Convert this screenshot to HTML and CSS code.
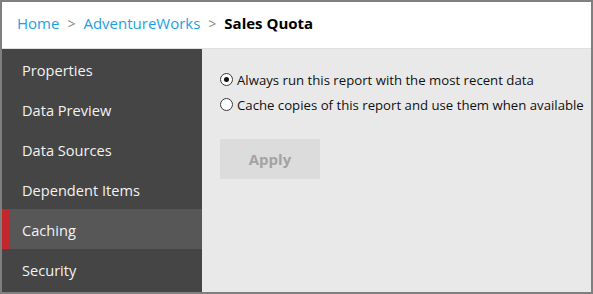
FILE: index.html
```html
<!DOCTYPE html>
<html>
<head>
<meta charset="utf-8">
<link rel="stylesheet" href="styles.css">
</head>
<body>
<div class="frame">
  <header class="header">
    <nav class="crumbs">
      <a class="crumb-link">Home</a>
      <span class="sep">&gt;</span>
      <a class="crumb-link">AdventureWorks</a>
      <span class="sep">&gt;</span>
      <span class="crumb-current">Sales Quota</span>
    </nav>
  </header>
  <div class="body">
    <aside class="sidebar">
      <div class="nav-item">Properties</div>
      <div class="nav-item">Data Preview</div>
      <div class="nav-item">Data Sources</div>
      <div class="nav-item">Dependent Items</div>
      <div class="nav-item active">Caching</div>
      <div class="nav-item">Security</div>
    </aside>
    <main class="content">
      <label class="option"><span class="radio checked"></span>Always run this report with the most recent data</label>
      <label class="option"><span class="radio"></span>Cache copies of this report and use them when available</label>
      <button class="apply">Apply</button>
    </main>
  </div>
</div>
</body>
</html>
```

FILE: styles.css
```css
* { box-sizing: border-box; }
html, body { margin: 0; padding: 0; }
body {
  width: 593px;
  height: 294px;
  font-family: "Open Sans", "Noto Sans", sans-serif;
  overflow: hidden;
}
.frame {
  width: 593px;
  height: 294px;
  border: 2px solid #7f7f7f;
  display: flex;
  flex-direction: column;
  background: #fff;
}
.header {
  height: 47px;
  flex: none;
  background: #fff;
  border-bottom: 1px solid #e0e0e0;
  display: flex;
  align-items: center;
  padding-left: 15px;
  padding-bottom: 4px;
}
.crumbs {
  display: flex;
  align-items: baseline;
  font-size: 15px;
}
.crumb-link { color: #1ba1e2; }
.sep { color: #8a8a8a; margin: 0 8px; font-size: 14px; }
.crumb-current { color: #000; font-weight: 700; }
.body {
  flex: 1;
  display: flex;
  min-height: 0;
}
.sidebar {
  width: 200px;
  background: #454545;
  display: flex;
  flex-direction: column;
}
.nav-item {
  height: 40px;
  flex: none;
  display: flex;
  align-items: center;
  padding-left: 20px;
  padding-top: 2px;
  color: #f2f2f2;
  font-size: 14.6px;
}
.nav-item.active {
  background: #575757;
  border-left: 8px solid #c1272d;
  padding-left: 12px;
}
.content {
  flex: 1;
  background: #e9e9e9;
  padding: 18px 0 0 18px;
  display: flex;
  flex-direction: column;
  align-items: flex-start;
}
.option {
  display: flex;
  align-items: center;
  font-size: 13.2px;
  color: #111;
  height: 25px;
}
.radio {
  width: 13px;
  height: 13px;
  border-radius: 50%;
  border: 1px solid #3a3a3a;
  background: #fff;
  margin-right: 4px;
  position: relative;
}
.radio.checked::after {
  content: "";
  position: absolute;
  left: 3px;
  top: 3px;
  width: 5px;
  height: 5px;
  border-radius: 50%;
  background: #111;
}
.apply {
  margin-top: 22px;
  width: 100px;
  height: 40px;
  border: none;
  background: #dcdcdc;
  color: #a3a3a3;
  font-family: inherit;
  font-weight: 700;
  font-size: 15px;
}
```
